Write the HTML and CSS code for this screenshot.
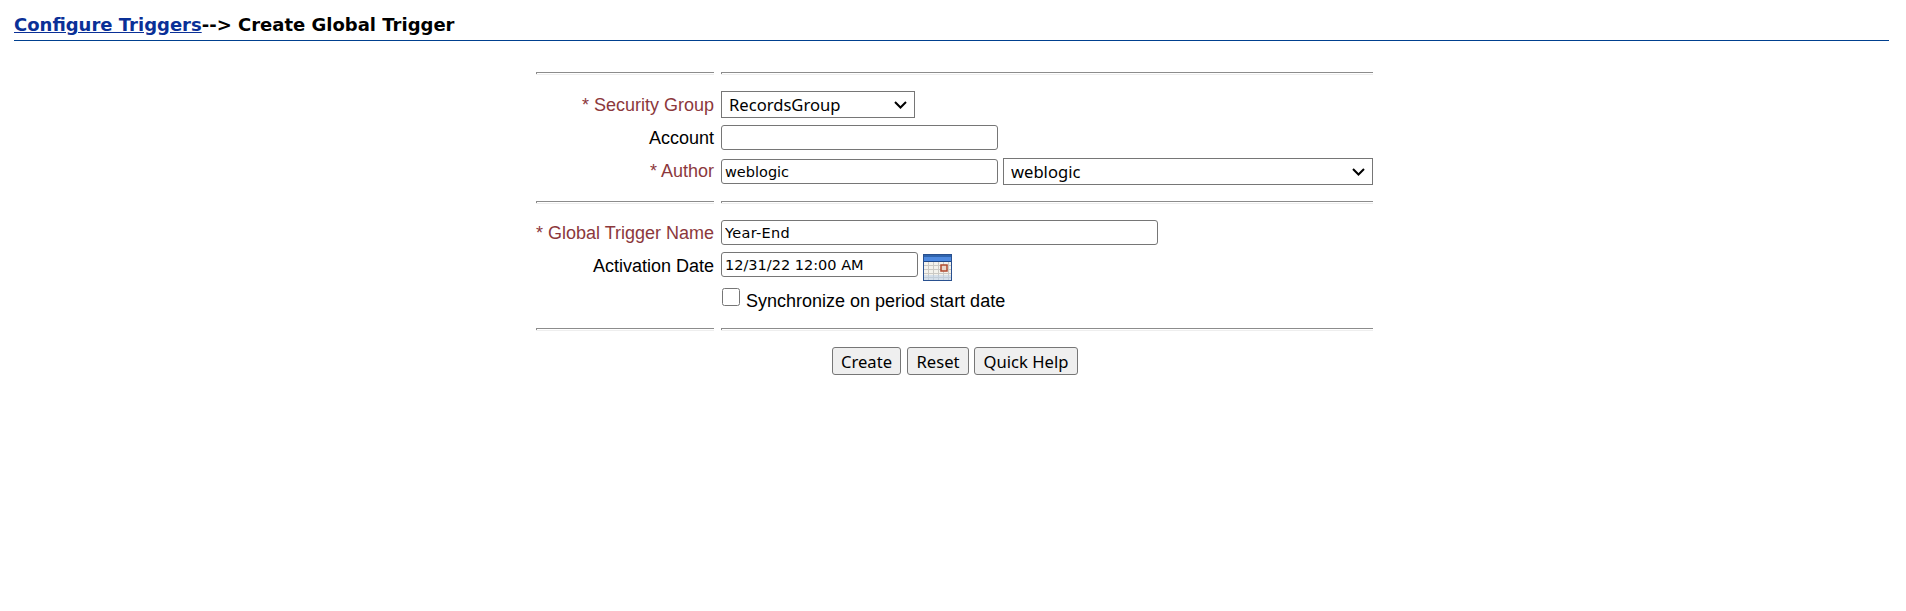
FILE: index.html
```html
<!DOCTYPE html>
<html lang="en">
<head>
<meta charset="utf-8">
<title>Create Global Trigger</title>
<link rel="stylesheet" href="styles.css">
</head>
<body>
<header class="page-header">
  <h1 class="page-title"><a href="#" class="crumb">Configure Triggers</a>--&gt; Create Global Trigger</h1>
</header>
<form class="form">
  <div class="sep"><i></i><i></i></div>
  <div class="row row-sg">
    <label class="lbl req">* Security Group</label>
    <div class="ctl"><select class="sel sel-group"><option>RecordsGroup</option></select></div>
  </div>
  <div class="row row-ac">
    <label class="lbl">Account</label>
    <div class="ctl"><input class="inp inp-med" type="text"></div>
  </div>
  <div class="row row-au">
    <label class="lbl req">* Author</label>
    <div class="ctl"><input class="inp inp-med" type="text" value="weblogic"><select class="sel sel-author"><option>weblogic</option></select></div>
  </div>
  <div class="sep sep-2"><i></i><i></i></div>
  <div class="row row-gt">
    <label class="lbl req">* Global Trigger Name</label>
    <div class="ctl"><input class="inp inp-long" type="text" value="Year-End"></div>
  </div>
  <div class="row row-ad">
    <label class="lbl">Activation Date</label>
    <div class="ctl ctl-date"><input class="inp inp-date" type="text" value="12/31/22 12:00 AM">
      <svg class="cal" width="29" height="27" viewBox="0 0 29 27" aria-hidden="true">
        <rect x="1" y="1" width="27" height="25" fill="#f4f2ec"/>
        <path d="M5.5 8v18M10.5 8v18M15.5 8v18M20.5 8v18M25.5 8v18M1 11.5h27M1 15.5h27M1 19.5h27M1 23.5h27" stroke="#cbc9c4" fill="none"/>
        <rect x="1" y="21" width="27" height="5" fill="#bcd0ea" opacity=".55"/>
        <rect x="1" y="1" width="27" height="6" fill="#4f8ae0"/>
        <rect x="1" y="1" width="27" height="2" fill="#2f64ad"/>
        <rect x="1" y="7" width="27" height="1" fill="#1f4788"/>
        <rect x="18" y="11" width="6" height="6" fill="#e9d8cc" stroke="#b0492f" stroke-width="1.5"/>
        <rect x="0.5" y="0.5" width="28" height="26" fill="none" stroke="#29508f"/>
      </svg>
    </div>
  </div>
  <div class="row row-cb">
    <span class="lbl"></span>
    <label class="ctl chk"><input class="box" type="checkbox"><span>Synchronize on period start date</span></label>
  </div>
  <div class="sep sep-3"><i></i><i></i></div>
  <div class="actions">
    <button type="button" class="btn btn-create">Create</button>
    <button type="button" class="btn btn-reset">Reset</button>
    <button type="button" class="btn btn-help">Quick Help</button>
  </div>
</form>
</body>
</html>
```
FILE: styles.css
```css
* { box-sizing: border-box; }
html, body { margin: 0; padding: 0; background: #fff; }
body { font-family: "Liberation Sans", Arial, sans-serif; font-size: 18px; color: #000; height: 611px; overflow: hidden; }
.page-header { margin: 0 17px 0 14px; height: 41px; border-bottom: 1px solid #00408f; padding-top: 13px; }
.page-title { margin: 0; font-family: "DejaVu Sans", sans-serif; font-size: 18px; line-height: 24px; font-weight: 700; white-space: nowrap; }
.crumb { color: #0a3097; }
.form { width: 837px; margin: 31px 0 0 536px; }
.sep { display: grid; grid-template-columns: 178px 652px; column-gap: 7px; height: 3px; }
.sep i { display: block; border-top: 1px solid #8c8c8c; border-bottom: 1px solid #eee; height: 3px; background: linear-gradient(#8c8c8c, #8c8c8c) left top / 1px 100% no-repeat; }
.row { display: grid; grid-template-columns: 178px 652px; column-gap: 7px; align-items: center; }
.lbl { text-align: right; white-space: nowrap; line-height: 22px; }
.req { color: #8c383c; }
.ctl { display: flex; align-items: center; }
.row-sg { margin-top: 16px; height: 27px; }
.row-ac { margin-top: 7px; height: 25px; }
.row-au { margin-top: 8px; height: 27px; }
.row-au .lbl { margin-bottom: 2px; }
.sep-2 { margin-top: 16px; }
.row-gt { margin-top: 16px; height: 25px; }
.row-ad { margin-top: 7px; height: 28px; }
.ctl-date { align-items: flex-start; height: 28px; }
.row-cb { margin-top: 8px; height: 24px; }
.sep-3 { margin-top: 16px; }
.inp { height: 25px; border: 1px solid #767676; border-radius: 3px; padding: 0 3px; margin: 0; font-family: "DejaVu Sans", sans-serif; font-size: 14.5px; color: #000; background: #fff; }
.inp-med { width: 277px; }
.inp-long { width: 437px; letter-spacing: .3px; }
.inp-date { width: 197px; }
.sel { appearance: none; height: 27px; border: 1px solid #767676; border-radius: 0; margin: 0; font-family: "Noto Sans", sans-serif; font-size: 16.6px; color: #000; padding: 0 7px; background: #fff url("data:image/svg+xml,%3Csvg xmlns='http://www.w3.org/2000/svg' width='13' height='8' viewBox='0 0 13 8'%3E%3Cpath d='M1 1l5.5 5.5L12 1' fill='none' stroke='%23000' stroke-width='2'/%3E%3C/svg%3E") no-repeat right 7px center; }
.sel-group { width: 194px; }
.sel-author { width: 370px; margin-left: 5px; }
.cal { margin: 2px 0 0 5px; display: block; }
.chk { align-items: flex-start; height: 24px; }
.box { width: 18px; height: 18px; margin: 0 0 0 1px; }
.chk span { margin-left: 6px; line-height: 24px; margin-top: 1px; }
.actions { display: flex; margin: 16px 0 0 296px; }
.btn { height: 28px; padding: 0; border: 1px solid #767676; border-radius: 3px; background: #efefef; font-family: "Noto Sans", sans-serif; font-size: 16.6px; color: #000; margin: 0; }
.btn-create { width: 69px; }
.btn-reset { width: 62px; margin-left: 6px; }
.btn-help { width: 104px; margin-left: 5px; }
```
